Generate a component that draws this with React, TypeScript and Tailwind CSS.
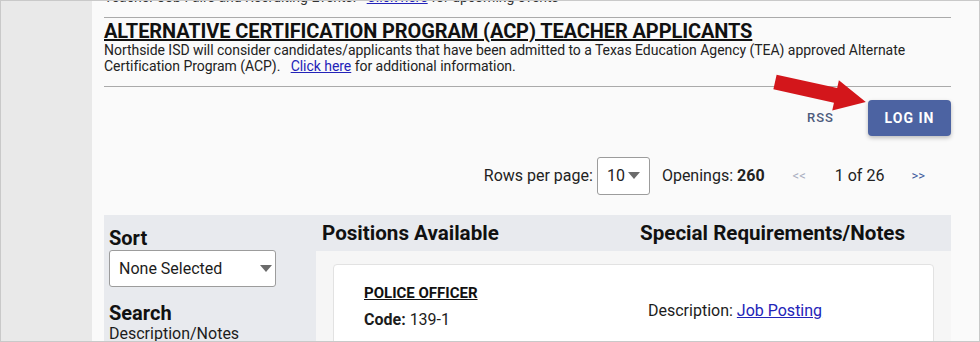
import React from 'react';

const font = { fontFamily: 'Roboto, "Noto Sans", Arial, sans-serif' };

function RedArrow() {
  return (
    <svg className="absolute left-[764px] top-[59px]" width="110" height="60" viewBox="0 0 110 60">
      <g transform="translate(10,22) rotate(12.4)">
        <polygon points="0,-7.5 62,-7.5 62,-15.5 93,0 62,15.5 62,7.5 0,7.5" fill="#d3161b" />
      </g>
    </svg>
  );
}

function Caret() {
  return (
    <svg width="12" height="8" viewBox="0 0 12 8">
      <polygon points="0,0 12,0 6,7" fill="#6b6b6b" />
    </svg>
  );
}

export default function App() {
  return (
    <div
      className="relative w-[980px] h-[342px] overflow-hidden border border-[#c9c9c9] flex bg-[#fafafa] text-[#1c1c1c]"
      style={font}
    >
      <aside className="w-[91px] shrink-0 bg-[#e9e9e9]" />

      <main className="flex-1 pl-[12px] pr-[28px]">
        {/* cut-off line from above */}
        <div className="-mt-[12px] h-[17px] text-[14px] leading-[16px] text-[#333]">
          Teacher Job Fairs and Recruiting Events:&nbsp;&nbsp;&nbsp;
          <a className="text-[#2323b8] underline">Click here</a> for upcoming events
        </div>
        <div className="border-t border-[#aaaaaa] mt-[11px]" />

        <section className="pt-[2px] pb-[12px]">
          <h2 className="text-[20px] leading-[22px] font-bold underline tracking-[-0.1px] text-[#111]">
            ALTERNATIVE CERTIFICATION PROGRAM (ACP) TEACHER APPLICANTS
          </h2>
          <p className="text-[14px] leading-[16px] tracking-[-0.04px] text-[#222]">
            Northside ISD will consider candidates/applicants that have been admitted to a Texas Education Agency (TEA) approved Alternate
            Certification Program (ACP).&nbsp;&nbsp;&nbsp;
            <a className="text-[#2323b8] underline">Click here</a> for additional information.
          </p>
        </section>
        <div className="border-t border-[#aaaaaa]" />

        <div className="flex justify-end items-center gap-[34px] mt-[13px]">
          <span className="text-[13px] font-medium tracking-[1px] text-[#4d5b7c]">RSS</span>
          <button className="w-[83px] h-[36px] rounded-[4px] bg-[#4c63a2] text-white text-[14px] font-bold tracking-[1px] shadow-[0_2px_4px_rgba(0,0,0,0.25)]">
            LOG IN
          </button>
        </div>

        <div className="flex justify-end items-center mt-[21px] mr-[26px] text-[16px] text-[#222]">
          <span className="mr-[4px]">Rows per page:</span>
          <div className="w-[53px] h-[38px] border border-[#9c9c9c] rounded-[3px] bg-white flex items-center justify-between px-[9px]">
            <span>10</span>
            <Caret />
          </div>
          <span className="ml-[12px]">
            Openings: <b className="font-bold">260</b>
          </span>
          <span className="ml-[28px] text-[13px] text-[#a9aec0]">&lt;&lt;</span>
          <span className="ml-[29px]">1 of 26</span>
          <span className="ml-[27px] text-[13px] text-[#3e5a9c]">&gt;&gt;</span>
        </div>

        <div className="flex mt-[20px]">
          <div className="w-[212px] shrink-0 bg-[#e8eaee] pl-[5px] pt-[11px] h-[200px]">
            <h3 className="text-[20px] leading-[24px] font-bold text-[#111]">Sort</h3>
            <div className="w-[167px] h-[37px] border border-[#9c9c9c] rounded-[3px] bg-white flex items-center justify-between pl-[9px] pr-[3px] text-[16px]">
              <span>None Selected</span>
              <Caret />
            </div>
            <h3 className="text-[20px] leading-[24px] font-bold text-[#111] mt-[14px]">Search</h3>
            <div className="text-[16px] leading-[18px]">Description/Notes</div>
          </div>

          <div className="flex-1">
            <div className="h-[36px] bg-[#e8eaee] flex items-center pl-[6px] text-[20.6px] font-bold text-[#111]">
              <span className="w-[318px]">Positions Available</span>
              <span>Special Requirements/Notes</span>
            </div>
            <div className="bg-[#f6f6f6] pl-[17px] pr-[17px] pt-[13px] h-[200px]">
              <div className="bg-white border border-[#e2e2e2] rounded-[4px] flex pt-[19px] pl-[30px] h-[200px]">
                <div className="w-[284px]">
                  <div className="text-[15px] leading-[18px] font-bold underline text-[#111]">POLICE OFFICER</div>
                  <div className="text-[16px] leading-[20px] mt-[8px]">
                    <b className="font-bold">Code:</b> 139-1
                  </div>
                </div>
                <div className="text-[16px] pt-[15px]">
                  Description: <a className="text-[#2323b8] underline">Job Posting</a>
                </div>
              </div>
            </div>
          </div>
        </div>
      </main>

      <RedArrow />
    </div>
  );
}
